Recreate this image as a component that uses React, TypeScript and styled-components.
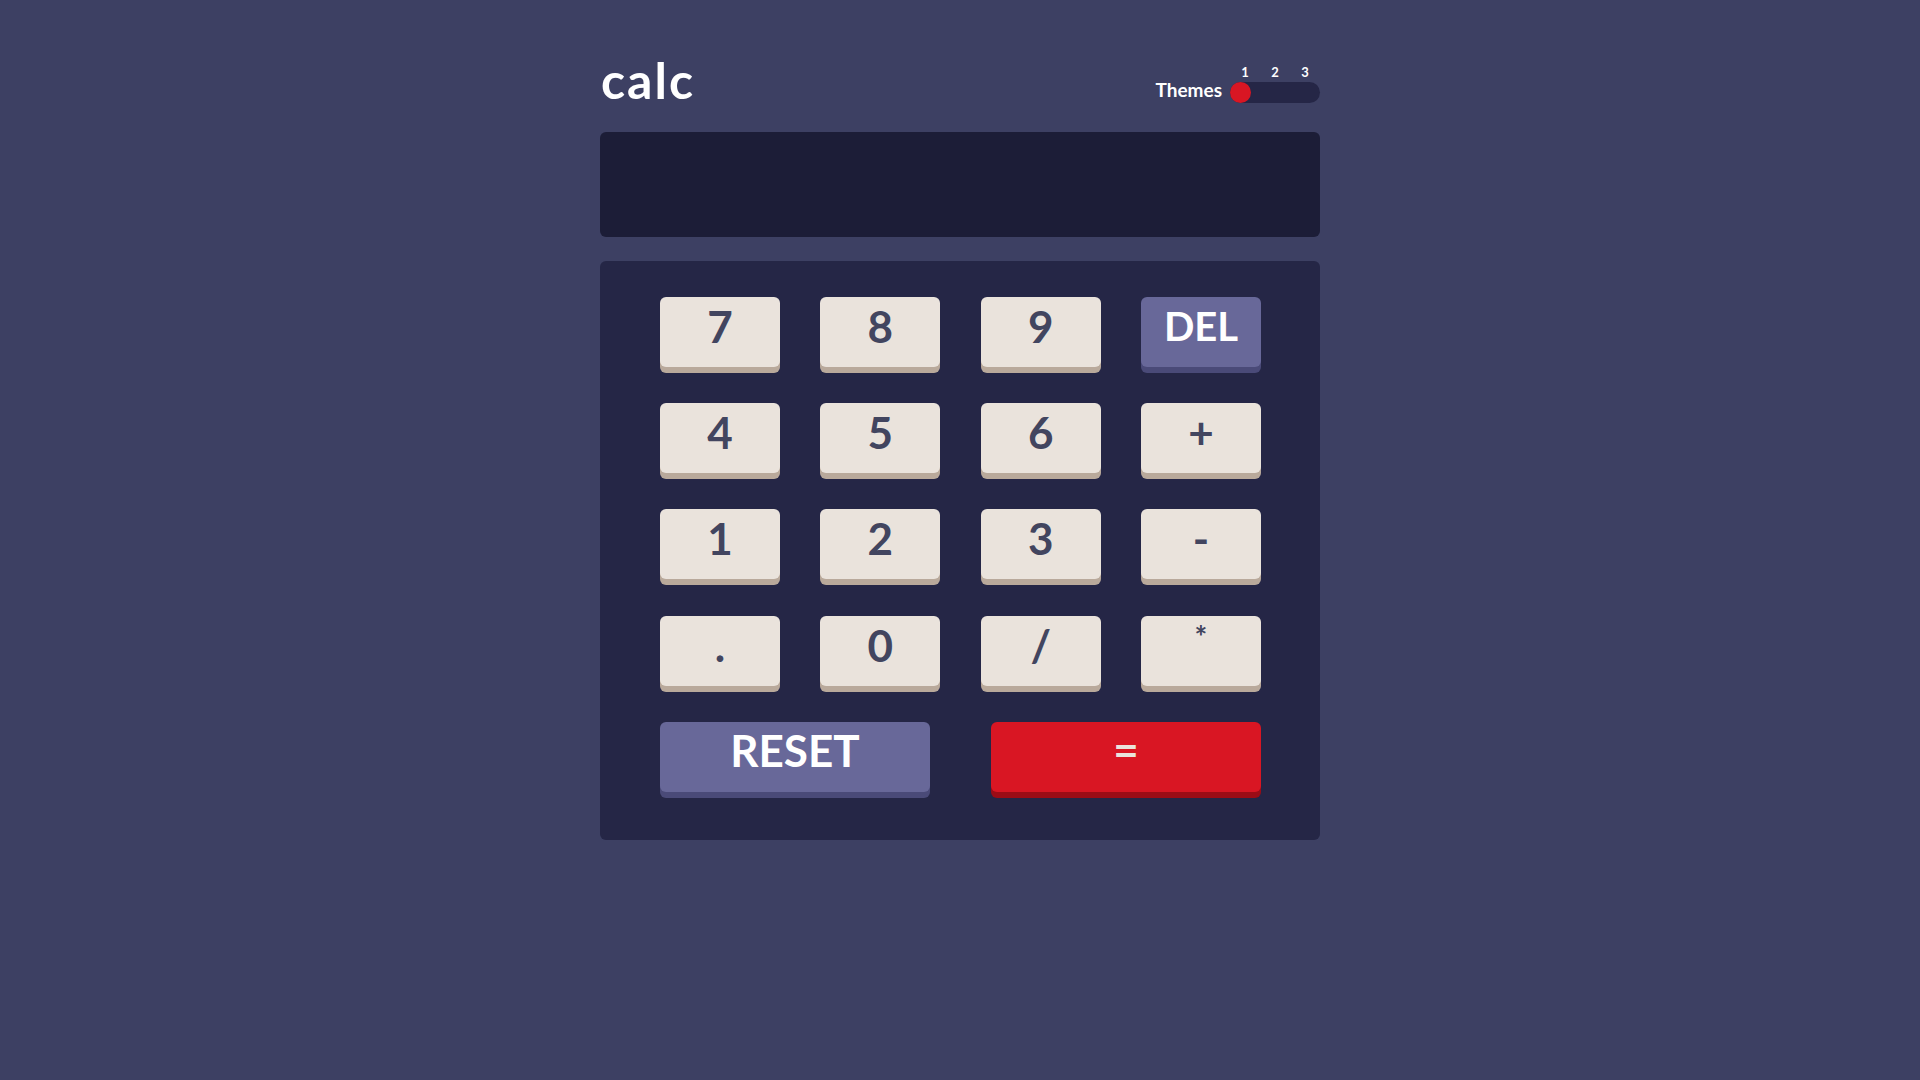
import React from "react";
import styled, { createGlobalStyle } from "styled-components";

const Global = createGlobalStyle`
  html, body { margin: 0; padding: 0; }
  body {
    background: #3d4063;
    font-family: "Lato", "Liberation Sans", sans-serif;
    min-height: 100vh;
  }
`;

const Page = styled.main`
  width: 720px;
  margin: 0 auto;
  padding-top: 50px;
`;

const Header = styled.header`
  display: flex;
  justify-content: space-between;
  align-items: flex-end;
  height: 58px;
  margin-bottom: 24px;
`;

const Logo = styled.h1`
  margin: 0;
  color: #ffffff;
  font-size: 50px;
  font-weight: 700;
  letter-spacing: 2px;
  line-height: 1;
  padding-left: 1px;
  padding-bottom: 3px;
`;

const ThemeBox = styled.div`
  display: flex;
  align-items: flex-end;
  gap: 8px;
  padding-bottom: 5px;
`;

const ThemeLabel = styled.span`
  color: #ffffff;
  font-size: 19px;
  font-weight: 700;
  line-height: 1;
  padding-bottom: 4px;
`;

const ToggleCol = styled.div`
  display: flex;
  flex-direction: column;
  gap: 3px;
`;

const Numbers = styled.div`
  display: grid;
  grid-template-columns: repeat(3, 30px);
  justify-items: center;
  color: #ffffff;
  font-size: 13px;
  font-weight: 700;
  line-height: 1;
`;

const Track = styled.div`
  width: 90px;
  height: 21px;
  border-radius: 11px;
  background: #252646;
  display: flex;
  align-items: center;
`;

const Dot = styled.span`
  width: 21px;
  height: 21px;
  border-radius: 50%;
  background: #d91623;
`;

const Display = styled.div`
  height: 105px;
  border-radius: 6px;
  background: #1c1d37;
  margin-bottom: 24px;
`;

const Keypad = styled.section`
  background: #252646;
  border-radius: 6px;
  padding: 36px 59px 42px 60px;
  display: grid;
  grid-template-columns: repeat(4, 120px);
  justify-content: space-between;
  row-gap: 30.2px;
`;

type Variant = "light" | "blue" | "red";

const colors: Record<Variant, { face: string; shade: string; text: string }> = {
  light: { face: "#eae3dc", shade: "#b9a99b", text: "#42455f" },
  blue: { face: "#686899", shade: "#4a4a78", text: "#ffffff" },
  red: { face: "#d91623", shade: "#9b0c16", text: "#eae3dc" },
};

const Key = styled.button<{ $variant: Variant; $size?: number; $pb?: number }>`
  height: 70px;
  margin-bottom: 6px;
  border: none;
  border-radius: 6px;
  background: ${(p) => colors[p.$variant].face};
  box-shadow: 0 6px 0 ${(p) => colors[p.$variant].shade};
  color: ${(p) => colors[p.$variant].text};
  font-family: "Lato", "Liberation Sans", sans-serif;
  font-weight: 700;
  font-size: ${(p) => p.$size ?? 44}px;
  line-height: 1;
  display: flex;
  align-items: center;
  justify-content: center;
  padding: 0 0 ${(p) => p.$pb ?? 12}px;
  cursor: pointer;
`;

const BottomRow = styled.div`
  grid-column: 1 / -1;
  display: grid;
  grid-template-columns: 270px 270px;
  justify-content: space-between;
`;

export default function App() {
  const rows: string[][] = [
    ["7", "8", "9", "DEL"],
    ["4", "5", "6", "+"],
    ["1", "2", "3", "-"],
    [".", "0", "/", "*"],
  ];
  return (
    <>
      <Global />
      <Page>
        <Header>
          <Logo>calc</Logo>
          <ThemeBox>
            <ThemeLabel>Themes</ThemeLabel>
            <ToggleCol>
              <Numbers>
                <span>1</span>
                <span>2</span>
                <span>3</span>
              </Numbers>
              <Track>
                <Dot />
              </Track>
            </ToggleCol>
          </ThemeBox>
        </Header>
        <Display />
        <Keypad>
          {rows.flat().map((k) =>
            k === "DEL" ? (
              <Key key={k} $variant="blue" $size={40}>
                {k}
              </Key>
            ) : k === "*" ? (
              <Key key={k} $variant="light" $size={30} $pb={30}>
                {k}
              </Key>
            ) : (
              <Key key={k} $variant="light">
                {k}
              </Key>
            )
          )}
          <BottomRow>
            <Key $variant="blue" $pb={14}>
              RESET
            </Key>
            <Key $variant="red" $pb={16}>
              =
            </Key>
          </BottomRow>
        </Keypad>
      </Page>
    </>
  );
}
